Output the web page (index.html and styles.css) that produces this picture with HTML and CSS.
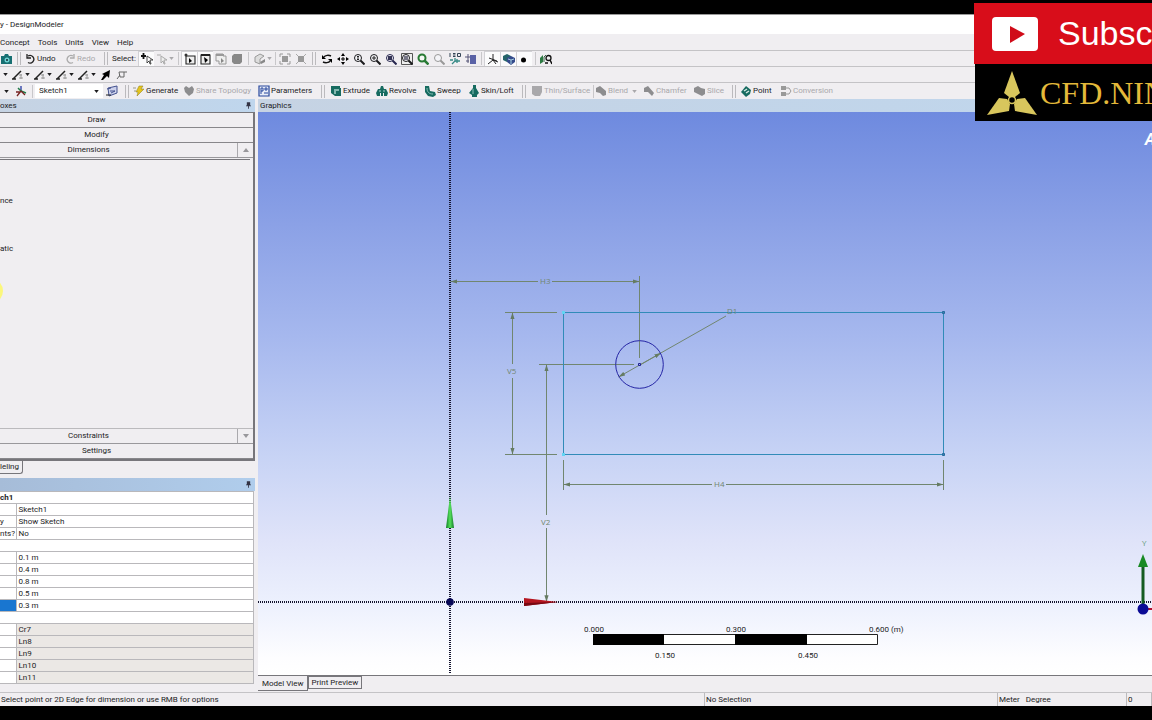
FILE: index.html
```html
<!DOCTYPE html>
<html lang="en">
<head>
<meta charset="utf-8">
<title>DesignModeler</title>
<link rel="stylesheet" href="styles.css">
</head>
<body>
<svg class="defs" aria-hidden="true">
  <symbol id="caret" viewBox="0 0 6 4"><path d="M0 0h6L3 4z" fill="currentColor"/></symbol>
  <symbol id="box" viewBox="0 0 12 12"><path d="M1 1h10v6l-2 4H4L1 9z" fill="currentColor"/></symbol>
  <symbol id="lens" viewBox="0 0 12 12"><circle cx="5" cy="5" r="3.5" fill="#f4f4f8" stroke="currentColor" stroke-width="1"/><path d="M7.5 7.5l4 4" stroke="currentColor" stroke-width="2"/></symbol>
  <symbol id="fit" viewBox="0 0 12 12"><path d="M3 3h6v6H3z" fill="#999"/><path d="M1 4V1h3M8 1h3v3M11 8v3H8M4 11H1V8" fill="none" stroke="#999"/></symbol>
  <symbol id="pin" viewBox="0 0 6 8"><path d="M1 0h4v4h1v1H0V4h1zM2.5 5h1v3h-1z" fill="#334"/></symbol>
  <symbol id="plane" viewBox="0 0 12 12"><path d="M1 10L9 2M0 10h4" stroke="#222" stroke-width="1.5"/><path d="M7 6h3M7 9h4M9 5v5" stroke="#888" stroke-width=".8"/></symbol>
</svg>
<div class="app">
  <header class="titlebar">y - DesignModeler</header>
  <nav class="menubar">
    <button>Concept</button><button>Tools</button><button>Units</button><button>View</button><button>Help</button>
  </nav>

  <div class="toolbar toolbar-view">
    <button aria-label="Screenshot"><svg viewBox="0 0 12 12"><path d="M0 3h3l1-2h3l1 2h3v8H0z" fill="#176f72"/><circle cx="6" cy="7" r="2.5" fill="#6fd3d2"/><circle cx="6" cy="7" r="1" fill="#123"/></svg></button>
    <i class="grip"></i>
    <button><svg viewBox="0 0 12 12"><path d="M4 3a3.800 3.800 0 1 1 0 6.500M3 1v4h4" fill="none" stroke="#222" stroke-width="1.300"/></svg>Undo</button>
    <button class="off"><svg viewBox="0 0 12 12"><path d="M9 3a3.800 3.800 0 1 0 0 6.500M10 1v4H6" fill="none" stroke="#aaa" stroke-width="1.300"/></svg>Redo</button>
    <i class="grip"></i>
    <span>Select:</span>
    <button class="on" aria-label="New selection"><svg viewBox="0 0 12 12"><path d="M0 3h5M2.500 0v6" stroke="#111" stroke-width="1.800"/><path d="M6 3v7l2-2 1 3h1L9 7h3z" fill="#fff" stroke="#222" stroke-width=".8"/></svg></button>
    <button aria-label="Select mode"><svg viewBox="0 0 12 12"><path d="M1 2h4M5 3v7l2-2 1 3h1L8 7h3z" fill="#eee" stroke="#aaa"/></svg><svg class="caret off"><use href="#caret"/></svg></button>
    <i class="sep"></i>
    <button class="on" aria-label="Points"><svg viewBox="0 0 12 12"><path d="M2 3h9v8H2z" fill="#eee" stroke="#222" stroke-width="1.100"/><path d="M5 5v5l3-2z"/><circle cx="2" cy="2" r="1.500" fill="#333"/></svg></button>
    <button class="on" aria-label="Edges"><svg viewBox="0 0 12 12"><path d="M1 2h9v9H1z" fill="#eee" stroke="#222" stroke-width="1.100"/><path d="M1 2h9" stroke="#222" stroke-width="2"/><path d="M4 4l1 6 3-3z"/></svg></button>
    <button aria-label="Faces"><svg viewBox="0 0 12 12"><path d="M1 1h7v2h3v8H4V8H1z" fill="#eee" stroke="#999"/><path d="M1 2h8" stroke="#999" stroke-width="2"/><path d="M6 5v5l3-2z" fill="#888"/></svg></button>
    <button aria-label="Bodies" class="off"><svg viewBox="0 0 12 12"><path d="M1 3l2-2h8v8l-2 2H3L1 9z" fill="#888"/></svg></button>
    <i class="sep"></i>
    <button aria-label="Extend"><svg viewBox="0 0 12 12"><path d="M1 4l5-3 4 2-4 3v5L1 9z" fill="#ddd" stroke="#999"/><path d="M6 9l5-3v3l-4 2" fill="#888"/></svg><svg class="caret off"><use href="#caret"/></svg></button>
    <i class="sep"></i>
    <button aria-label="Hide"><svg><use href="#fit"/></svg></button>
    <button aria-label="Show"><svg viewBox="0 0 12 12"><path d="M3 3h6v6H3z" fill="#999"/><path d="M1 1l2 2M11 1L9 3M1 11l2-2M11 11L9 9" stroke="#aaa"/></svg></button>
    <i class="grip"></i>
    <button aria-label="Rotate"><svg viewBox="0 0 12 12"><path d="M3 4c1-2 5-2 7-1M9 8c-1 2-5 2-7 1" fill="none" stroke="#111" stroke-width="1.500"/><path d="M1 2v4h4zM11 10V6H7z"/></svg></button>
    <button aria-label="Pan"><svg viewBox="0 0 12 12"><path d="M6 0l2 3H4zM6 12l2-3H4zM0 6l3-2v4zM12 6L9 4v4zM5.500 4h1v1.500H8v1H6.500V8h-1V6.500H4v-1h1.500z"/></svg></button>
    <button aria-label="Zoom"><svg><use href="#lens"/><path d="M5 3v4M4 4l1-1 1 1M4 6l1 1 1-1" stroke="#222" fill="none"/></svg></button>
    <button aria-label="Zoom in"><svg><use href="#lens"/><path d="M5 3v4M3 5h4" stroke="#222"/></svg></button>
    <button aria-label="Zoom to selection"><svg class="navy"><use href="#lens"/><path d="M3 3h4v4H3z" fill="#335"/></svg></button>
    <button aria-label="Box zoom"><svg><path d="M.5.5h11v11H.5z" fill="#eee" stroke="#555"/><use href="#lens"/><path d="M3 3h4v4H3z" fill="#778"/></svg></button>
    <button aria-label="Zoom to fit"><svg class="green" viewBox="0 0 12 12"><circle cx="5" cy="5" r="3.500" fill="#f4f8f4" stroke="currentColor" stroke-width="2"/><path d="M7.500 7.500l4 4" stroke="currentColor" stroke-width="2.500"/></svg></button>
    <button aria-label="Magnifier"><svg class="grey"><use href="#lens"/></svg></button>
    <button aria-label="Isometric view"><svg viewBox="0 0 12 12"><path d="M1 0v4M4 .5h2.500M4 2h2.500M4 3.500h2.500M8.500.5h3v3h-3z" fill="none" stroke="#345" stroke-width="1"/><path d="M6 5v3M6 8h5M6 8l-3 3M1 7h3M8 6v4" stroke="#368a86" stroke-width="1.300"/></svg></button>
    <button aria-label="Look at"><svg viewBox="0 0 12 12"><path d="M5 2h6v9H5z" fill="#5a62a6"/><path d="M0 4h5M1 8h3M3 1v9" stroke="#557"/></svg></button>
    <i class="sep"></i>
    <button class="on" aria-label="Display plane"><svg viewBox="0 0 12 12"><path d="M6 1v6l5 2M6 7l-5 4M2 5l8 3M6 7l3 4" fill="none" stroke="#222" stroke-width="1"/></svg></button>
    <button class="on" aria-label="Display model"><svg viewBox="0 0 12 12"><path d="M0 3l4-2 4 2v4L4 9 0 7z" fill="#25656a"/><path d="M4 5l4-2 4 2v4l-4 3-4-3z" fill="#354b8c"/><path d="M5 6l3 1 3-1M8 7v4" stroke="#a5cfe0" fill="none"/></svg></button>
    <button class="on" aria-label="Display points"><svg viewBox="0 0 12 12"><circle cx="4.500" cy="7" r="2.500"/></svg></button>
    <i class="sep"></i>
    <button aria-label="Inspect"><svg viewBox="0 0 12 12"><path d="M0 5l3-3v7l-3 2z" fill="#2d7a43"/><path d="M4 4l2-2M4 9V4" stroke="#364"/><circle cx="8.500" cy="5" r="2.500" fill="#eee" stroke="#111" stroke-width="1.300"/><path d="M5 10h3M10 7l2 4" stroke="#111" stroke-width="1.500"/></svg></button>
  </div>

  <div class="toolbar toolbar-plane">
    <button aria-label="Plane menu"><svg class="caret"><use href="#caret"/></svg></button>
    <button aria-label="Edge 1"><svg><use href="#plane"/></svg><svg class="caret"><use href="#caret"/></svg></button>
    <button aria-label="Edge 2"><svg><use href="#plane"/></svg><svg class="caret"><use href="#caret"/></svg></button>
    <button aria-label="Edge 3"><svg><use href="#plane"/></svg><svg class="caret"><use href="#caret"/></svg></button>
    <button aria-label="Edge 4"><svg><use href="#plane"/></svg><svg class="caret"><use href="#caret"/></svg></button>
    <button aria-label="Direction"><svg viewBox="0 0 12 12"><path d="M10 1L9 9 7 7l-4 4H1l3-5-2-1z"/></svg></button>
    <button aria-label="Vertex"><svg viewBox="0 0 12 12"><path d="M1 10l3-4M3 3h5v5H4zM8 3h3" fill="none" stroke="#666" stroke-width="1"/></svg></button>
  </div>

  <div class="toolbar toolbar-features">
    <button aria-label="Plane list"><svg class="caret"><use href="#caret"/></svg></button>
    <button aria-label="New plane"><svg viewBox="0 0 12 12"><path d="M6 6V1" stroke="#34a" stroke-width="1.400"/><path d="M6 6l5 2M3 3l3 3" stroke="#247b4a" stroke-width="1.500"/><path d="M6 6l-4 5M6 6l4 4M1 7h4" stroke="#722" stroke-width="1.300"/></svg></button>
    <i class="sep"></i>
    <label class="combo"><select aria-label="Active sketch"><option>Sketch1</option></select><svg class="caret"><use href="#caret"/></svg></label>
    <button aria-label="New sketch"><svg viewBox="0 0 12 12"><path d="M2 3l9-2v7l-8 3z" fill="#cdd2ec" stroke="#44528f"/><path d="M1 4l4-1M4 6h5M5 8l4-2" stroke="#44528f"/><path d="M0 10h5" stroke="#222"/></svg></button>
    <i class="grip"></i>
    <button><svg viewBox="0 0 12 12"><path d="M6 1h4L8 4h3L4 11l1-4H3z" fill="#e5c51c" stroke="#8a7a1a" stroke-width=".5"/><path d="M0 3h3M1 6h2" stroke="#998"/></svg>Generate</button>
    <button class="off"><svg viewBox="0 0 12 12"><path d="M1 3l2-2 3 2 3-2 2 3-1 4-4 3-4-4z" fill="#8d8d8f"/></svg>Share Topology</button>
    <button><svg viewBox="0 0 12 12"><path d="M1 1h10v10H1z" fill="#e9edf8" stroke="#26479c" stroke-width="1.200"/><path d="M3 9V3h2v3H3M7 3h2v2H7zM6 8h4" fill="none" stroke="#26479c"/></svg>Parameters</button>
    <i class="grip"></i>
    <button><svg class="teal" viewBox="0 0 12 12"><path d="M1 1h9v2h1v8H5l-4-3z"/><path d="M4 4h5v5H4z" fill="#83b8b0"/><path d="M6 6h4v4H6z"/></svg>Extrude</button>
    <button><svg class="teal" viewBox="0 0 12 12"><path d="M0 8l2-4h2l1-3h2l1 3h2l2 4-1 3H8V8H7v3H5V8H4v3H1z"/><path d="M3 6h2M7 6h2" stroke="#a4cfc8"/></svg>Revolve</button>
    <button><svg class="teal" viewBox="0 0 12 12"><path d="M1 1h4l1 5 5 1 1 3-3 2-5-1-3-4z"/><path d="M3 3c0 4 2 6 6 6" fill="none" stroke="#8ac1b7"/></svg>Sweep</button>
    <button><svg class="teal" viewBox="0 0 12 12"><path d="M5 0h3v3l3 5-2 2v2H4v-2L1 8l4-5z"/><path d="M5 4v5" stroke="#8ac1b7"/></svg>Skin/Loft</button>
    <i class="grip"></i>
    <button class="off"><svg><use href="#box"/></svg>Thin/Surface</button>
    <i class="sep"></i>
    <button class="off"><svg viewBox="0 0 12 12"><path d="M1 3l4-2 6 5v4l-3 1-3-3-4-1z" fill="#8d8d8f"/></svg>Blend<svg class="caret gap"><use href="#caret"/></svg></button>
    <button class="off"><svg viewBox="0 0 12 12"><path d="M1 3l4-2 6 7-2 3-4-4H1z" fill="#8d8d8f"/></svg>Chamfer</button>
    <button class="off"><svg viewBox="0 0 12 12"><path d="M0 3l4-2 3 2 4 1v5l-3 2-4-2-4-2z" fill="#8d8d8f"/></svg>Slice</button>
    <i class="grip"></i>
    <button><svg class="teal" viewBox="0 0 12 12"><path d="M1 7l5-6 5 4-1 4-4 3z"/><path d="M4 6l3-2M6 8l3-2" stroke="#d3e8e2" stroke-width="1.500"/></svg>Point</button>
    <button class="off"><svg viewBox="0 0 12 12"><path d="M1 1h5v4H1zM1 7h5v4H1z" fill="#999"/><path d="M6 3h3l2 3-2 3H6" fill="none" stroke="#999"/></svg>Conversion</button>
  </div>

  <main class="work">
    <aside class="side">
      <h2 class="pane-title">oxes<svg class="pin"><use href="#pin"/></svg></h2>
      <div class="toolboxes">
        <button class="fold">Draw</button>
        <button class="fold">Modify</button>
        <div class="fold-row"><button class="fold">Dimensions</button><button class="scroll" aria-label="Scroll up"><svg class="caret up"><use href="#caret"/></svg></button></div>
        <div class="tools"><span>nce</span><span>atic</span><i class="cursor-glow"></i></div>
        <div class="fold-row"><button class="fold">Constraints</button><button class="scroll" aria-label="Scroll down"><svg class="caret"><use href="#caret"/></svg></button></div>
        <button class="fold">Settings</button>
      </div>
      <div class="side-tabs"><button>leling</button></div>
      <h2 class="pane-title details-title"><svg class="pin"><use href="#pin"/></svg></h2>
      <table class="details">
        <colgroup><col class="key"><col></colgroup>
        <tbody>
        <tr><th colspan="2">ch1</th></tr>
        <tr><td></td><td>Sketch1</td></tr>
        <tr><td>y</td><td>Show Sketch</td></tr>
        <tr><td>nts?</td><td>No</td></tr>
        <tr><td colspan="2"></td></tr>
        <tr><td></td><td>0.1 m</td></tr>
        <tr><td></td><td>0.4 m</td></tr>
        <tr><td></td><td>0.8 m</td></tr>
        <tr><td></td><td>0.5 m</td></tr>
        <tr><td class="picked"></td><td>0.3 m</td></tr>
        <tr><td colspan="2"></td></tr>
        </tbody>
        <tbody class="locked">
        <tr><td></td><td>Cr7</td></tr>
        <tr><td></td><td>Ln8</td></tr>
        <tr><td></td><td>Ln9</td></tr>
        <tr><td></td><td>Ln10</td></tr>
        <tr><td></td><td>Ln11</td></tr>
        </tbody>
      </table>
    </aside>

    <section class="graphics">
      <h2 class="pane-title">Graphics</h2>
      <div class="canvas">
        <svg class="drawing" role="img" aria-label="Sketch with dimensions">
          <defs>
            <marker id="tip" viewBox="0 0 8 6" refX="8" refY="3" markerWidth="7" markerHeight="5" orient="auto-start-reverse"><path d="M0 .5L8 3 0 5.500z" fill="#657b62"/></marker>
            <linearGradient id="greenCone"><stop offset="0" stop-color="#0d7d24"/><stop offset=".5" stop-color="#55e05c"/><stop offset="1" stop-color="#117a28"/></linearGradient>
          </defs>
          <g stroke="#15152f" stroke-width="2" stroke-dasharray="1 1">
            <path d="M192 0V562"/><line x1="0" y1="490" x2="100%" y2="490"/>
          </g>
          <g class="dims">
            <path d="M280 169.500H192.500" marker-end="url(#tip)"/><path d="M294 169.500H381.500" marker-end="url(#tip)"/>
            <path d="M381.500 164V246M247 200.500H299M247 342.500H299"/>
            <path d="M254.500 252V200.500" marker-end="url(#tip)"/><path d="M254.500 266V342.500" marker-end="url(#tip)"/>
            <path d="M281 252.500H376"/>
            <path d="M288.500 403V252.500" marker-end="url(#tip)"/><path d="M288.500 416V490" marker-end="url(#tip)"/>
            <path d="M305.500 348V378M685.500 348V378"/>
            <path d="M454 372.500H305.500" marker-end="url(#tip)"/><path d="M468 372.500H685.500" marker-end="url(#tip)"/>
            <path d="M468 204L360.500 265" marker-end="url(#tip)"/><path d="M382 253L403 241" marker-end="url(#tip)"/>
          </g>
          <path d="M305.500 200.500H685.500V342.500H305.500z" fill="none" stroke="#318bb8"/>
          <path d="M304 199h3v3h-3zM304 341h3v3h-3z" fill="#62d5f4"/>
          <path d="M684.500 199.500h2v2h-2zM684.500 341.500h2v2h-2z" fill="#3b83b4" stroke="#276b9d"/>
          <circle cx="381.500" cy="252.500" r="23.800" fill="none" stroke="#2525a5"/>
          <path d="M380.500 251.500h2v2h-2z" fill="#9fb3ee" stroke="#222291"/>
          <g class="dim-text"><text x="282" y="172">H3</text><text x="249" y="262">V5</text><text x="469" y="202">D1</text><text x="456" y="375">H4</text><text x="283" y="413">V2</text></g>
          <path d="M192 384l4 32h-8z" fill="url(#greenCone)"/>
          <path d="M266 486l34 4-34 4z" fill="#b51620"/><path d="M266 491l34-1-34 4z" fill="#780812"/>
          <circle cx="192" cy="490" r="3.800" fill="#070755"/>
          <path d="M335.500 522.500h284v10h-284z" fill="#fff" stroke="#222"/>
          <path d="M335 522h71v11h-71zM477 522h72v11h-72z"/>
          <g class="scale-text"><text x="326" y="520">0.000</text><text x="468" y="520">0.300</text><text x="611" y="520">0.600 (m)</text><text x="397" y="546">0.150</text><text x="540" y="546">0.450</text></g>
        </svg>
        <svg class="triad" viewBox="0 0 17 80" aria-hidden="true">
          <text x="7" y="7" class="axis">Y</text>
          <path d="M8 72V28" stroke="#155c22" stroke-width="3"/><path d="M8 15l5 13H3z" fill="#198a24"/>
          <path d="M8 70h9" stroke="#b01030" stroke-width="2"/><circle cx="8" cy="70" r="5.500" fill="#0b0b95"/>
        </svg>
        <span class="brand">A</span>
      </div>
      <div class="view-tabs"><button class="active">Model View</button><button>Print Preview</button></div>
    </section>
  </main>

  <footer class="status"><span>Select point or 2D Edge for dimension or use RMB for options</span><span>No Selection</span><span>Meter &nbsp; Degree</span><span>0</span></footer>

  <div class="promo">
    <button class="subscribe"><svg viewBox="0 0 46 34"><rect width="46" height="34" rx="4" fill="#fff"/><path d="M18 9l15 8-15 9z" fill="#d00c19"/></svg>Subscribe</button>
    <div class="logo"><svg viewBox="0 0 50 44"><g fill="#d8c65d"><path d="M25 0l8 22-5 4h-6l-5-4z"/><path d="M0 44l12-17 8 1 3 5-1 7z"/><path d="M50 44L38 27l-8 1-3 5 1 7z"/></g><circle cx="25" cy="29" r="3.500" fill="#000" stroke="#d8c65d" stroke-width="1.500"/></svg>CFD.NINJA</div>
  </div>
</div>
</body>
</html>
```

FILE: styles.css
```css
* { box-sizing: border-box; }
body {
  margin: 0;
  background: #000;
  color: #1c1c1e;
  font: 8px/12px Roboto, "Noto Sans", sans-serif;
}
button, select {
  margin: 0;
  padding: 0;
  border: 0;
  background: none;
  color: inherit;
  font: inherit;
}
.defs { position: absolute; width: 0; height: 0; }
.app {
  position: relative;
  display: flex;
  flex-direction: column;
  height: 100vh;
  padding: 14px 0;
  overflow: hidden;
}
.titlebar { flex: none; height: 20px; background: #fff; line-height: 20px; border-top: 1px solid #999; }
.menubar { flex: none; display: flex; gap: 8px; height: 16px; padding-top: 1px; background: #f0eef1; }

/* Toolbars */
.toolbar {
  flex: none;
  display: grid;
  height: 16px;
  align-items: center;
  background: #f0eef1;
  border-top: 1px solid #c4c3c6;
  white-space: nowrap;
}
.toolbar-view {
  grid-template-columns: 14px 10px 40px 36px 12px 26px 16px 22px 5px repeat(4, 16px) 7px 22px 3px 16px 16px 10px repeat(10, 16px) 5px 16px 16px 16px 6px 16px;
}
.toolbar-plane { grid-template-columns: 10px repeat(4, 22px) 16px 16px; }
.toolbar-features {
  height: 17px;
  grid-template-columns: 13px 16px 6px 68px 18px 12px 50px 75px 58px 14px 46px 48px 44px 49px 14px 60px 4px 48px 51px 34px 12px 40px 54px;
}
.toolbar button { display: flex; align-items: center; gap: 1px; height: 15px; }
.toolbar button[aria-label] { justify-content: center; }
.toolbar svg { flex: none; width: 12px; height: 12px; }
.toolbar .caret { width: 5px; height: 3px; }
.toolbar .gap { margin-left: 3px; }
.toolbar .on { background: #fbfbfc; border-left: 1px solid #d2d1d5; border-top: 1px solid #d2d1d5; }
.off { color: #a9a8ab; }
.navy { color: #26264f; }
.green { color: #287a34; }
.grey { color: #999; }
.teal { fill: #176b60; }
.grip { justify-self: center; width: 4px; height: 13px; border: solid #bbbabd; border-width: 0 1px; }
.sep { justify-self: center; width: 1px; height: 13px; background: #c8c7ca; }
.combo { display: flex; align-items: center; height: 14px; padding: 0 4px; background: #fff; }
.combo select { flex: 1; appearance: none; outline: 0; }

/* Panes */
.work { flex: 1; display: grid; grid-template-columns: 255px 1fr; gap: 3px; min-height: 0; background: #f0eef1; }
.pane-title {
  flex: none;
  display: flex;
  align-items: center;
  height: 13px;
  margin: 0;
  padding: 0 2px 0 0;
  background: linear-gradient(90deg, #c6d3e3, #bfd6ed);
  font-size: 8px;
  font-weight: 400;
}
.pin { width: 5px; height: 7px; margin: 0 2px 0 auto; }
.side { display: flex; flex-direction: column; min-height: 0; }
.toolboxes {
  flex: 1;
  display: flex;
  flex-direction: column;
  border: solid #77767b;
  border-width: 1px 2px 2px 0;
}
.fold { flex: none; height: 15px; border-bottom: 1px solid #88878b; text-align: center; }
.toolboxes .fold { padding-right: 60px; }
.fold-row { flex: none; display: grid; grid-template-columns: 1fr 15px; border-bottom: 1px solid #99989c; }
.fold-row .fold { height: 14px; border: 0; border-right: 1px solid #aaa9ad; }
.scroll { display: flex; align-items: center; justify-content: center; color: #98979b; }
.scroll .caret { width: 6px; height: 4px; }
.up { transform: rotate(180deg); }
.tools {
  flex: 1;
  position: relative;
  display: flex;
  flex-direction: column;
  gap: 36px;
  margin: 1px 3px 0 0;
  padding-top: 35px;
  border-top: 1px solid #77767b;
}
.tools + .fold-row { border-top: 1px solid #bbbabd; }
.cursor-glow {
  position: absolute;
  left: -23px;
  top: 118px;
  width: 26px;
  height: 26px;
  border-radius: 50%;
  background: #fbf77c;
}
.side-tabs { flex: none; display: flex; height: 17px; }
.side-tabs button { width: 23px; height: 13px; border: solid #77767b; border-width: 0 1px 1px 0; border-radius: 0 0 3px 0; text-align: left; }
.details-title { background: linear-gradient(90deg, #a6bcd8, #b0cdec); }
.details { flex: none; width: 254px; margin-bottom: 8px; border-collapse: collapse; table-layout: fixed; background: #fff; }
.key { width: 16px; }
.details td, .details th {
  height: 12px;
  padding: 0 0 0 2px;
  border: 1px solid #b9b8bb;
  border-left-width: 0;
  line-height: 11px;
  text-align: left;
  white-space: nowrap;
}
.details td:first-child, .details th { padding-left: 0; }
.details .picked { background: #1976d0; }
.locked td + td { background: #ebe8e5; }

/* Graphics */
.graphics { display: flex; flex-direction: column; min-width: 0; }
.graphics .pane-title { padding-left: 2px; }
.canvas {
  position: relative;
  flex: 1;
  overflow: hidden;
  background: linear-gradient(#6e8adf 0%, #8ba1e6 20%, #a6b8ee 40%, #c7d3f5 61%, #dfe3f9 76%, #ecf0fd 87%, #fdfdff 97%, #fff 100%);
}
.drawing { display: block; width: 100%; height: 100%; }
.dims { fill: none; stroke: #71866f; stroke-width: 1; }
.dim-text { fill: #71866f; font: 8px "Open Sans", sans-serif; }
.scale-text { fill: #1c1c1e; font: 8px Roboto, sans-serif; }
.triad { position: absolute; right: 0; bottom: 56px; width: 17px; height: 80px; }
.axis { fill: #5f9b77; font: 8px "Open Sans", sans-serif; }
.brand { position: absolute; left: 887px; top: 18px; color: #fff; font: italic 700 16px/18px "Open Sans", sans-serif; }
.view-tabs { flex: none; display: flex; align-items: flex-start; height: 17px; background: #f0eef1; border-top: 1px solid #77767b; }
.view-tabs button { height: 13px; padding: 0 3px; border: 1px solid #77767b; line-height: 11px; }
.view-tabs .active { height: 15px; padding: 0 3px 0 4px; border-width: 0 1px 1px 0; line-height: 15px; }

.status {
  flex: none;
  display: grid;
  grid-template-columns: 705fr 293fr 129fr 25fr;
  height: 14px;
  background: #f0eef1;
  border-top: 1px solid #c4c3c6;
}
.status span { padding-left: 1px; border-right: 1px solid #bbbabd; line-height: 13px; white-space: nowrap; }

/* Channel banner over the window */
.promo { position: absolute; top: 3px; right: 0; width: 178px; overflow: hidden; }
.subscribe {
  display: flex;
  align-items: center;
  gap: 20px;
  width: 100%;
  height: 61px;
  padding-left: 18px;
  background: #d80d1a;
  color: #fff;
  font: 34px "Liberation Sans", sans-serif;
}
.subscribe svg { flex: none; width: 46px; height: 34px; }
.logo {
  display: flex;
  align-items: center;
  gap: 3px;
  height: 57px;
  margin-left: 1px;
  padding-left: 12px;
  background: #000;
  color: #e4b93a;
  font: 32px/32px "Liberation Serif", serif;
}
.logo svg { flex: none; width: 50px; height: 44px; }
```
